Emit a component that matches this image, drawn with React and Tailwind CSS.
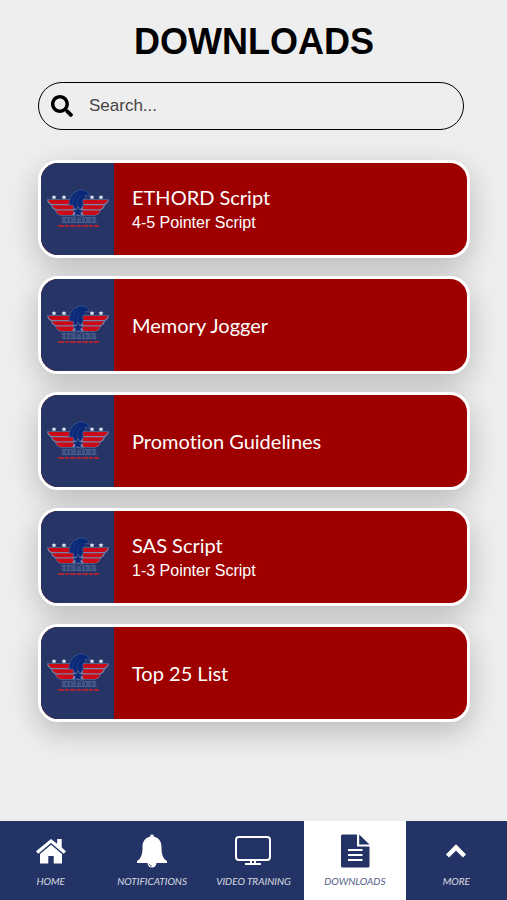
import { useState } from 'react'
import { FaSearch } from 'react-icons/fa'

const downloads = [
  { title: 'ETHORD Script', subtitle: '4-5 Pointer Script' },
  { title: 'Memory Jogger' },
  { title: 'Promotion Guidelines' },
  { title: 'SAS Script', subtitle: '1-3 Pointer Script' },
  { title: 'Top 25 List' },
]

function EagleLogo() {
  return (
    <svg viewBox="0 0 64 42" className="w-16" aria-hidden="true">
      {/* wings */}
      <path
        d="M1 11.500H63Q62 16 59 17Q58 21 55 22Q53 27 49 27.500H15Q11 27 9 22Q6 21 5 17Q2 16 1 11.500Z"
        fill="#7683ab"
      />
      <g fill="#cc0a16">
        <path d="M2 12H27V16H6Q3 15 2 12Z" />
        <path d="M6 17.200H27V21.200H10Q7 20 6 17.200Z" />
        <path d="M10 22.400H29L26 27H15Q11 26 10 22.400Z" />
        <path d="M62 12H37V16H58Q61 15 62 12Z" />
        <path d="M58 17.200H37V21.200H54Q57 20 58 17.200Z" />
        <path d="M54 22.400H35L38 27H49Q53 26 54 22.400Z" />
      </g>
      {/* stars */}
      <g fill="#e3e7f2">
        <path d="M8 7l.8 1.300 1.600.200-1.100 1.200.300 1.600L8 10.600l-1.600.7.300-1.600-1.100-1.200 1.600-.2Z" />
        <path d="M18 7l.8 1.300 1.600.200-1.100 1.200.300 1.600-1.600-.7-1.600.7.300-1.600-1.100-1.200 1.600-.2Z" />
        <path d="M46 7l.8 1.300 1.600.200-1.100 1.200.300 1.600-1.600-.7-1.600.7.300-1.600-1.100-1.200 1.600-.2Z" />
        <path d="M55 7l.8 1.300 1.600.200-1.100 1.200.300 1.600-1.600-.7-1.600.7.300-1.600-1.100-1.200 1.600-.2Z" />
      </g>
      {/* eagle head and neck */}
      <path
        d="M23 17Q23 8 29 4Q33 1 38 2Q42 3 44 7.500L39 7Q41 9 39 10Q36 11 37 14Q38 17 35 21H28L27 17Z"
        fill="#0a2878"
        stroke="#4c64a0"
        strokeWidth="0.6"
      />
      <path d="M27 15Q27 9 32 5M31 17Q30 11 36 7" fill="none" stroke="#223f87" strokeWidth="0.8" />
      <path
        d="M32 18l1.700 3.700 4 .4-3 2.700.9 4-3.600-2.100-3.600 2.100.9-4-3-2.700 4-.4Z"
        fill="#0d2a72"
        stroke="#7f8db8"
        strokeWidth="0.5"
      />
      {/* banner and ribbon under the tail */}
      <path d="M16 32H50" stroke="#3f5183" strokeWidth="5" strokeDasharray="4 1 3 1 5 1" />
      <path d="M15 29.500H27M37 29.500H49M16 34.500H51" stroke="#5f709c" strokeWidth="0.6" />
      <path d="M12 38H53" stroke="#a92339" strokeWidth="2" strokeDasharray="6 1 4 1" />
    </svg>
  )
}

function DownloadCard({ title, subtitle }) {
  return (
    <li>
      <button className="flex h-[98px] w-full overflow-hidden rounded-[20px] border-3 border-white bg-[#9e0000] text-left text-white shadow-[0_10px_30px_rgba(0,0,0,0.22)]">
        <span className="flex h-full w-[73px] shrink-0 items-center justify-center bg-[#263566]">
          <EagleLogo />
        </span>
        <span className="flex h-full flex-col justify-center pl-[18px]">
          <span className="font-[Lato,sans-serif] text-xl leading-7 [font-variant-ligatures:none]">{title}</span>
          {subtitle ? <span className="text-base leading-6">{subtitle}</span> : null}
        </span>
      </button>
    </li>
  )
}

function HomeIcon() {
  return (
    <svg viewBox="0 0 32 32" className="size-8" fill="currentColor" aria-hidden="true">
      <path d="M16 4 1 16.200l2.200 2.600L16 8l12.800 10.800 2.200-2.600-4.300-3.700V4h-4.500v4.700Z" />
      <path d="M16 9.700 5 19v9.500h8.300v-7.600h5.400v7.600H27V19Z" />
    </svg>
  )
}

function BellIcon() {
  return (
    <svg viewBox="0 0 34 36" className="h-9 w-[34px]" fill="currentColor" aria-hidden="true">
      <path d="M17 1.500q2 0 2 2.300c5 1 7.500 5 7.500 10.200 0 8 1.500 11.500 5.500 14v2H2v-2c4-2.500 5.500-6 5.500-14 0-5.200 2.500-9.200 7.500-10.200q0-2.300 2-2.300Z" />
      <path d="M12.500 30a4.500 4.500 0 0 0 9 0Z" />
      <path d="M14.300 31q.5 2 2.500 2.300" fill="none" stroke="#243366" strokeWidth="0.8" />
    </svg>
  )
}

function MonitorIcon() {
  return (
    <svg viewBox="0 0 36 32" className="h-8 w-9" fill="none" stroke="currentColor" strokeWidth="2" aria-hidden="true">
      <rect x="1" y="2" width="34" height="23" rx="3" />
      <path d="M16 25v4M20 25v4M10 29h16" />
    </svg>
  )
}

function DocumentIcon() {
  return (
    <svg viewBox="0 0 30 36" className="h-9 w-[30px]" fill="currentColor" aria-hidden="true">
      <path d="M2.500 1.500H17V13.500h12.500V33q0 1.500-1.500 1.500H2.500Q1 34.500 1 33V3q0-1.500 1.500-1.500Z" />
      <path d="M19.200 1.500 29.500 11.500H19.200Z" />
      <path d="M8 17h14.500M8 22h14.500M8 27h14.500" stroke="white" strokeWidth="2.200" />
    </svg>
  )
}

function ChevronIcon() {
  return (
    <svg viewBox="0 0 32 32" className="size-8" fill="none" stroke="currentColor" strokeWidth="4.500" aria-hidden="true">
      <path d="M7.500 21 16 12.500 24.500 21" />
    </svg>
  )
}

const tabs = [
  { label: 'HOME', Icon: HomeIcon },
  { label: 'NOTIFICATIONS', Icon: BellIcon },
  { label: 'VIDEO TRAINING', Icon: MonitorIcon },
  { label: 'DOWNLOADS', Icon: DocumentIcon, active: true },
  { label: 'MORE', Icon: ChevronIcon },
]

function App() {
  const [query, setQuery] = useState('')

  const visible = downloads.filter((d) => d.title.toLowerCase().includes(query.toLowerCase()))

  return (
    <div className="flex min-h-screen flex-col bg-[#eeeeee] font-['Liberation_Sans',Arial,sans-serif]">
      <main className="flex-1 pr-[37px] pl-[38px] pt-5 pb-8">
        <h1 className="text-center text-4xl leading-[44px] font-bold text-black">DOWNLOADS</h1>

        <label className="mt-[18px] mr-[6px] flex h-12 items-center rounded-full border border-black pl-3">
          <FaSearch className="size-[22px] shrink-0 text-black" />
          <input
            type="text"
            aria-label="Search downloads"
            placeholder="Search..."
            value={query}
            onChange={(e) => setQuery(e.target.value)}
            className="ml-4 min-w-0 flex-1 bg-transparent text-[17px] text-black outline-none placeholder:text-[#444444]"
          />
        </label>

        <ul className="mt-[30px] space-y-[18px]">
          {visible.map((d) => (
            <DownloadCard key={d.title} title={d.title} subtitle={d.subtitle} />
          ))}
        </ul>
      </main>

      <nav className="sticky bottom-0 grid h-[79px] grid-cols-5 bg-[#243366]">
        {tabs.map(({ label, Icon, active }) => (
          <a
            key={label}
            href="#"
            aria-current={active ? 'page' : undefined}
            className={`flex flex-col items-center pt-3 ${active ? 'bg-white text-[#243366]' : 'text-white'}`}
          >
            <span className="flex h-9 items-center">
              <Icon />
            </span>
            <span className="mt-1 font-[Lato,sans-serif] text-[10px] leading-4 whitespace-nowrap italic opacity-80">{label}</span>
          </a>
        ))}
      </nav>
    </div>
  )
}

export default App
